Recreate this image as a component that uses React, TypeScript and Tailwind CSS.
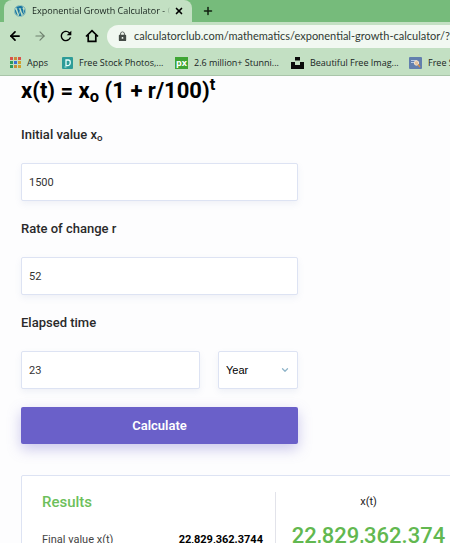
import { ArrowLeft, ArrowRight, ChevronDown, Plus, X } from "lucide-react";
import { useState, type ReactNode } from "react";
import { FaWordpress } from "react-icons/fa";
import { MdLock, MdRefresh } from "react-icons/md";

interface Bookmark {
  label: string;
  icon: ReactNode;
  width: string;
}

const dotColors = [
  "#d9534a", "#c98a3a", "#d9534a",
  "#2f9a5b", "#3c6fd1", "#d0a02c",
  "#2f9a5b", "#c98a3a", "#d0a02c",
];

function AppsIcon() {
  return (
    <svg width="11" height="11" viewBox="0 0 11 11" aria-hidden="true">
      {dotColors.map((color, i) => (
        <rect
          key={i}
          x={(i % 3) * 4}
          y={Math.floor(i / 3) * 4}
          width="3"
          height="3"
          fill={color}
        />
      ))}
    </svg>
  );
}

function StockIcon() {
  return (
    <svg width="11" height="12" viewBox="0 0 11 12" aria-hidden="true">
      <rect width="11" height="12" rx="1" fill="#2d9c98" />
      <path d="M4 3h2.2a2 2 0 0 1 2 2v1a2.6 2.6 0 0 1-2.6 2.6H4z" fill="none" stroke="#e8fffb" strokeWidth="1.3" />
      <path d="M2.5 10h2" stroke="#bdeee6" />
    </svg>
  );
}

function PxIcon() {
  return (
    <span className="flex h-3 w-[13px] items-center justify-center bg-[#3fa535] text-[9px] leading-none font-bold text-white">
      px
    </span>
  );
}

function UnsplashIcon() {
  return (
    <svg width="13" height="12" viewBox="0 0 13 12" aria-hidden="true">
      <path d="M4 0h5v3.5H4zM0 5h4v3h5V5h4v7H0z" fill="#0b0b0b" />
    </svg>
  );
}

function PhotoIcon() {
  return (
    <svg width="13" height="12" viewBox="0 0 13 12" aria-hidden="true">
      <rect width="13" height="12" rx="1" fill="#627fae" />
      <path d="M2 3.5h6M2 5.5h3" stroke="#b9cbe4" />
      <circle cx="7.5" cy="6" r="2.2" fill="#e4c19c" stroke="#f3e4cf" />
      <path d="m9 7.5 2 2.5" stroke="#d98c44" strokeWidth="1.3" />
    </svg>
  );
}

function HomeIcon() {
  return (
    <svg width="14" height="14" viewBox="0 0 14 14" aria-hidden="true">
      <path
        d="M1 7.5 7 1.6l6 5.9M3.2 6v6.4h7.6V6"
        fill="none"
        stroke="#000"
        strokeWidth="1.7"
      />
    </svg>
  );
}

const bookmarks: Bookmark[] = [
  { label: "Apps", icon: <AppsIcon />, width: "w-[52px]" },
  { label: "Free Stock Photos,...", icon: <StockIcon />, width: "w-[113px]" },
  { label: "2.6 million+ Stunni...", icon: <PxIcon />, width: "w-[116px]" },
  { label: "Beautiful Free Imag...", icon: <UnsplashIcon />, width: "w-[118px]" },
  { label: "Free Stock Images", icon: <PhotoIcon />, width: "w-[118px]" },
];

const fieldClass =
  "h-[38px] w-full min-w-0 rounded-xs border border-[#dde3f3] bg-white px-[7px] text-[11px] text-[#333] shadow-[0_3px_6px_rgba(120,140,190,0.10)] outline-none";
const labelClass = "h-5 text-[13px] leading-5 font-medium text-[#2a2a2a]";

function BrowserBar() {
  return (
    <header className="shrink-0 border-b border-[#a9c5a9] bg-[#c3e0c3] font-['Open_Sans',sans-serif] text-[#18241e]">
      {/* Tab strip */}
      <div className="flex h-[22px] bg-[#76bb7b] pl-1">
        <div className="flex w-[188px] items-center rounded-t-lg bg-[#c3e0c3] pr-2 pl-2.5">
          <FaWordpress className="size-3 shrink-0 text-[#1674a3]" />
          <span className="ml-1.5 w-[138px] overflow-hidden mask-r-from-95% text-[9px] leading-5 whitespace-nowrap">
            Exponential Growth Calculator - C
          </span>
          <button type="button" aria-label="Close tab" className="ml-1">
            <X className="size-2.5 text-black" strokeWidth={4} />
          </button>
        </div>
        <button type="button" aria-label="New tab" className="ml-2.5">
          <Plus className="size-3 text-[#10200f]" strokeWidth={3} />
        </button>
      </div>

      {/* Navigation row */}
      <div className="flex h-7 items-center pl-2">
        <div className="flex w-[99px] shrink-0 items-center gap-[11px]">
          <button type="button" aria-label="Back">
            <ArrowLeft className="size-3.5 text-black" strokeWidth={3} />
          </button>
          <button type="button" aria-label="Forward" className="text-[#6f806f]">
            <ArrowRight className="size-3.5" strokeWidth={2} />
          </button>
          <button type="button" aria-label="Reload">
            <MdRefresh className="size-4 text-black" stroke="currentColor" />
          </button>
          <button type="button" aria-label="Home">
            <HomeIcon />
          </button>
        </div>
        <div className="flex h-[23px] min-w-0 flex-1 items-center gap-1.5 rounded-l-full bg-[#f1f8f1] pl-2.5">
          <MdLock className="size-[11px] shrink-0 text-[#444b46]" />
          <input
            type="text"
            aria-label="Address"
            defaultValue="calculatorclub.com/mathematics/exponential-growth-calculator/?i"
            className="min-w-0 flex-1 bg-transparent font-[Lato,sans-serif] text-[11px] text-[#303a33] outline-none"
          />
        </div>
      </div>

      {/* Bookmarks */}
      <nav className="flex h-[25px] items-center overflow-hidden pl-2.5">
        {bookmarks.map((b) => (
          <a
            key={b.label}
            href="#"
            className={`flex shrink-0 items-center gap-1.5 whitespace-nowrap text-[9px] ${b.width}`}
          >
            {b.icon}
            {b.label}
          </a>
        ))}
      </nav>
    </header>
  );
}

export default function App() {
  const [initial, setInitial] = useState("1500");
  const [rate, setRate] = useState("52");
  const [time, setTime] = useState("23");

  return (
    <div className="flex h-screen flex-col overflow-hidden bg-[#fdfdfe] font-[Roboto,sans-serif]">
      <BrowserBar />
      <main className="min-h-0 flex-1 overflow-hidden pl-[21px]">
        <h1 className="h-[49px] text-[22px] leading-[30px] font-bold text-black">
          x(t) = x<sub>o</sub> (1 + r/100)<sup>t</sup>
        </h1>

        <form
          className="flex w-full max-w-[277px] flex-col"
          onSubmit={(e) => e.preventDefault()}
        >
          <label htmlFor="initial" className={labelClass}>
            Initial value x<sub>o</sub>
          </label>
          <input
            id="initial"
            value={initial}
            onChange={(e) => setInitial(e.target.value)}
            className={`mt-[18px] ${fieldClass}`}
          />

          <label htmlFor="rate" className={`mt-[18px] ${labelClass}`}>
            Rate of change r
          </label>
          <input
            id="rate"
            value={rate}
            onChange={(e) => setRate(e.target.value)}
            className={`mt-[18px] ${fieldClass}`}
          />

          <label htmlFor="time" className={`mt-[18px] ${labelClass}`}>
            Elapsed time
          </label>
          <div className="mt-[18px] flex gap-[18px]">
            <input
              id="time"
              value={time}
              onChange={(e) => setTime(e.target.value)}
              className={fieldClass}
            />
            <div className="relative w-20 shrink-0">
              <select
                aria-label="Time unit"
                className={`appearance-none text-black font-['Liberation_Sans',sans-serif] ${fieldClass}`}
              >
                <option>Year</option>
                <option>Month</option>
                <option>Day</option>
              </select>
              <ChevronDown
                className="pointer-events-none absolute top-3.5 right-2 size-2.5 text-[#8fb4c9]"
                strokeWidth={3}
              />
            </div>
          </div>

          <button
            type="submit"
            className="mt-[18px] h-[37px] rounded-xs bg-[#6a60c9] text-[13px] font-semibold text-white shadow-[0_5px_14px_rgba(106,96,201,0.35)]"
          >
            Calculate
          </button>
        </form>

        {/* Results card runs off the right edge of the window */}
        <section className="mt-[31px] -mr-3 flex rounded-xs border border-[#dde3f3] bg-white pt-4 pb-6">
          <div className="w-[254px] shrink-0 border-r border-[#e2e3ea] pr-3 pl-5">
            <h2 className="text-[15px] leading-5 font-medium text-[#6dbf5b]">
              Results
            </h2>
            <div className="mt-[18px] flex justify-between text-[11px] leading-5">
              <span className="text-[#444]">Final value x(t)</span>
              <strong className="font-bold text-black">22,829,362.3744</strong>
            </div>
          </div>
          <div className="min-w-0 flex-1 text-center">
            <p className="text-[11px] leading-5 text-[#222]">x(t)</p>
            <p className="mt-2 text-[22px] leading-8 font-medium text-[#62b850]">
              22,829,362.374
            </p>
          </div>
        </section>
      </main>
    </div>
  );
}
